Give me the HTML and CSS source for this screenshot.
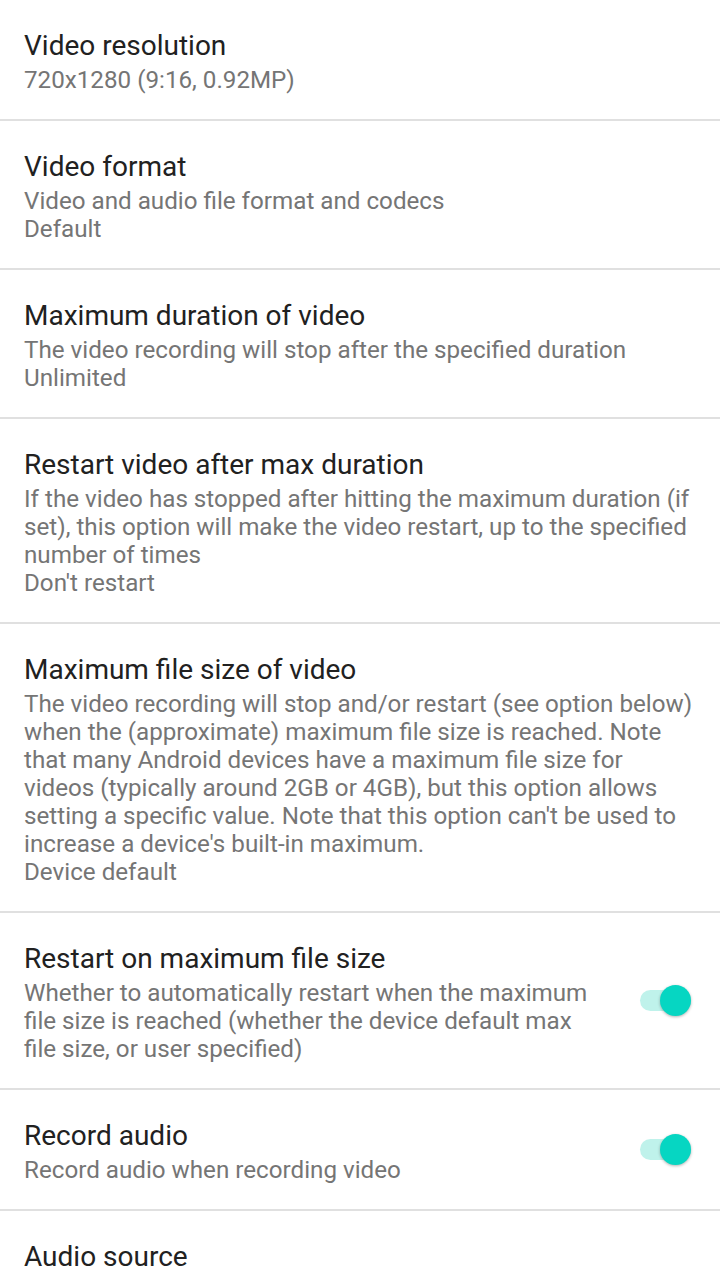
FILE: index.html
```html
<!DOCTYPE html>
<html lang="en">
<head>
    <meta charset="UTF-8">
    <title>Video settings</title>
    <link rel="stylesheet" href="styles.css">
</head>
<body>
    <main class="pref-list">

        <div class="pref">
            <div class="pref-text">
                <h2 class="pref-title">Video resolution</h2>
                <p class="pref-summary">720x1280 (9:16, 0.92MP)</p>
            </div>
        </div>

        <div class="pref">
            <div class="pref-text">
                <h2 class="pref-title">Video format</h2>
                <p class="pref-summary">Video and audio file format and codecs<br>Default</p>
            </div>
        </div>

        <div class="pref">
            <div class="pref-text">
                <h2 class="pref-title">Maximum duration of video</h2>
                <p class="pref-summary">The video recording will stop after the specified duration<br>Unlimited</p>
            </div>
        </div>

        <div class="pref">
            <div class="pref-text">
                <h2 class="pref-title">Restart video after max duration</h2>
                <p class="pref-summary">If the video has stopped after hitting the maximum duration (if set), this option will make the video restart, up to the specified number of times<br>Don't restart</p>
            </div>
        </div>

        <div class="pref">
            <div class="pref-text">
                <h2 class="pref-title">Maximum file size of video</h2>
                <p class="pref-summary">The video recording will stop and/or restart (see option below) when the (approximate) maximum file size is reached. Note that many Android devices have a maximum file size for videos (typically around 2GB or 4GB), but this option allows setting a specific value. Note that this option can't be used to increase a device's built-in maximum.<br>Device default</p>
            </div>
        </div>

        <div class="pref pref-switch">
            <div class="pref-text">
                <h2 class="pref-title">Restart on maximum file size</h2>
                <p class="pref-summary">Whether to automatically restart when the maximum file size is reached (whether the device default max file size, or user specified)</p>
            </div>
            <div class="switch on">
                <span class="switch-track"></span>
                <span class="switch-thumb"></span>
            </div>
        </div>

        <div class="pref pref-switch">
            <div class="pref-text">
                <h2 class="pref-title">Record audio</h2>
                <p class="pref-summary">Record audio when recording video</p>
            </div>
            <div class="switch on">
                <span class="switch-track"></span>
                <span class="switch-thumb"></span>
            </div>
        </div>

        <div class="pref">
            <div class="pref-text">
                <h2 class="pref-title">Audio source</h2>
            </div>
        </div>

    </main>
</body>
</html>
```

FILE: styles.css
```css
body {
    margin: 0;
    background-color: #ffffff;
    font-family: Roboto, "Noto Sans", sans-serif;
}

.pref-list {
    display: flex;
    flex-direction: column;
}

.pref {
    display: flex;
    align-items: center;
    padding: 30px 24px 25px 24px;
    border-bottom: 2px solid #e0e0e0;
}

.pref-text {
    flex: 1;
    min-width: 0;
}

.pref-title {
    margin: 0;
    font-size: 28px;
    font-weight: 400;
    line-height: 32px;
    color: #212121;
}

.pref-summary {
    margin: 4px 0 0 0;
    font-size: 24.2px;
    line-height: 28px;
    color: #757575;
}

.pref-switch {
    padding-right: 29px;
}

.pref-switch .pref-text {
    padding-right: 40px;
}

/* switch widget */
.switch {
    position: relative;
    width: 51px;
    height: 31px;
    flex-shrink: 0;
    margin-bottom: 5px;
}

.switch-track {
    position: absolute;
    left: 0;
    top: 5px;
    width: 51px;
    height: 21px;
    border-radius: 11px;
    background-color: #bff2eb;
}

.switch-thumb {
    position: absolute;
    right: 0;
    top: 0;
    width: 31px;
    height: 31px;
    border-radius: 50%;
    background-color: #06d6c2;
    box-shadow: 0 1px 3px rgba(0, 0, 0, 0.3);
}
```
